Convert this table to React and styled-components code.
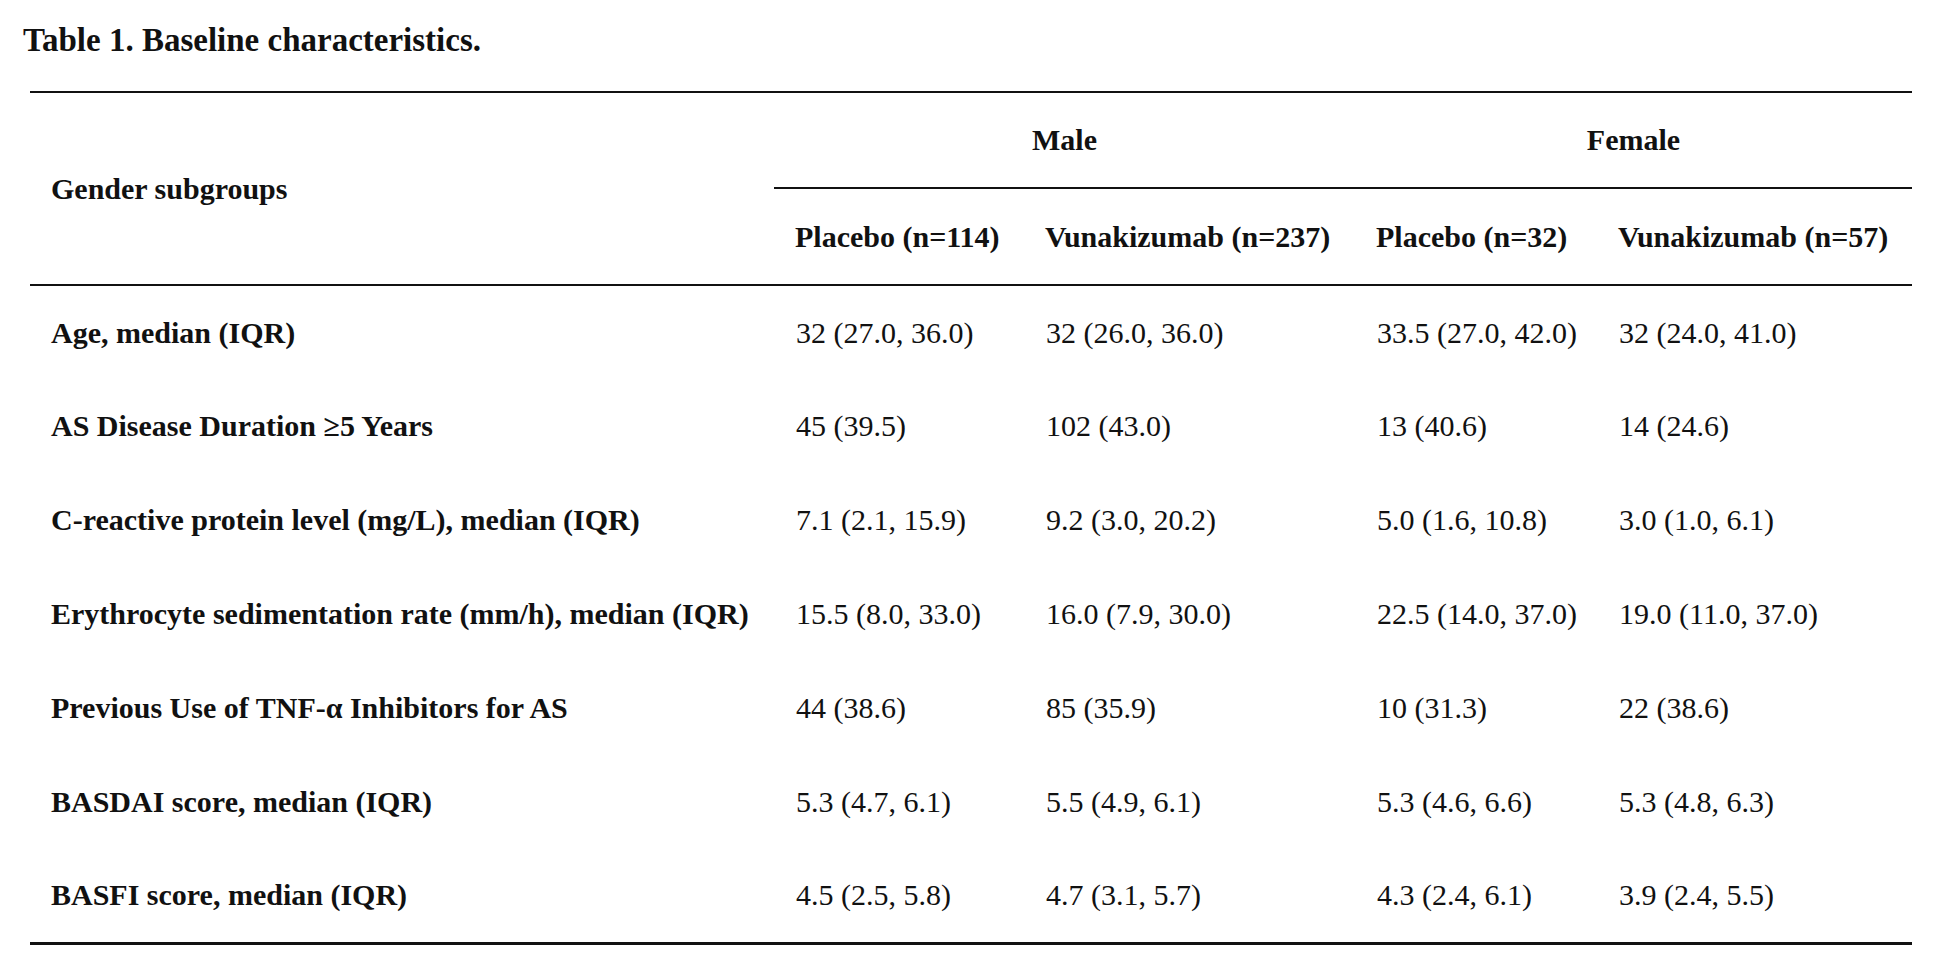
import React from "react";
import styled, { createGlobalStyle } from "styled-components";

const GlobalStyle = createGlobalStyle`
  body {
    margin: 0;
    background: #fff;
    font-family: "Liberation Serif", "Times New Roman", serif;
    color: #111;
  }
`;

const Page = styled.div`
  width: 1949px;
  height: 970px;
  padding: 22px 0 0 0;
  box-sizing: border-box;
  background: #fff;
`;

const Title = styled.h1`
  margin: 0 0 33px 23px;
  font-size: 33px;
  line-height: 36px;
  font-weight: bold;
`;

const Table = styled.table`
  margin-left: 30px;
  width: 1882px;
  table-layout: fixed;
  border-collapse: collapse;
  border-top: 2px solid #111;
  border-bottom: 3px solid #111;
  font-size: 30px;
  line-height: 34px;
`;

const HeadRow = styled.tr`
  height: ${(p) => p.$h}px;
`;

const HeadCell = styled.th`
  padding: 0 0 0 ${(p) => (p.$center ? 0 : 21)}px;
  text-align: ${(p) => (p.$center ? "center" : "left")};
  vertical-align: middle;
  font-weight: bold;
  white-space: nowrap;
  border-bottom: ${(p) => (p.$rule ? "2px solid #111" : "none")};
`;

const BodyRow = styled.tr`
  height: 94px;
`;

const RowLabel = styled.td`
  padding: 0 0 0 21px;
  font-weight: bold;
  white-space: nowrap;
  vertical-align: middle;
`;

const ValueCell = styled.td`
  padding: 0 0 0 22px;
  white-space: nowrap;
  vertical-align: middle;
`;

const rows = [
  ["Age, median (IQR)", "32 (27.0, 36.0)", "32 (26.0, 36.0)", "33.5 (27.0, 42.0)", "32 (24.0, 41.0)"],
  ["AS Disease Duration \u22655 Years", "45 (39.5)", "102 (43.0)", "13 (40.6)", "14 (24.6)"],
  ["C-reactive protein level (mg/L), median (IQR)", "7.1 (2.1, 15.9)", "9.2 (3.0, 20.2)", "5.0 (1.6, 10.8)", "3.0 (1.0, 6.1)"],
  ["Erythrocyte sedimentation rate (mm/h), median (IQR)", "15.5 (8.0, 33.0)", "16.0 (7.9, 30.0)", "22.5 (14.0, 37.0)", "19.0 (11.0, 37.0)"],
  ["Previous Use of TNF-\u03b1 Inhibitors for AS", "44 (38.6)", "85 (35.9)", "10 (31.3)", "22 (38.6)"],
  ["BASDAI score, median (IQR)", "5.3 (4.7, 6.1)", "5.5 (4.9, 6.1)", "5.3 (4.6, 6.6)", "5.3 (4.8, 6.3)"],
  ["BASFI score, median (IQR)", "4.5 (2.5, 5.8)", "4.7 (3.1, 5.7)", "4.3 (2.4, 6.1)", "3.9 (2.4, 5.5)"],
];

const arms = ["Placebo (n=114)", "Vunakizumab (n=237)", "Placebo (n=32)", "Vunakizumab (n=57)"];

const App = () => {
  return (
    <Page>
      <GlobalStyle />
      <Title>Table 1. Baseline characteristics.</Title>
      <Table>
        <colgroup>
          <col style={{ width: 744 }} />
          <col style={{ width: 250 }} />
          <col style={{ width: 331 }} />
          <col style={{ width: 242 }} />
          <col style={{ width: 315 }} />
        </colgroup>
        <thead>
          <HeadRow $h={96}>
            <HeadCell rowSpan={2} $rule>
              Gender subgroups
            </HeadCell>
            <HeadCell colSpan={2} $center $rule>
              Male
            </HeadCell>
            <HeadCell colSpan={2} $center $rule>
              Female
            </HeadCell>
          </HeadRow>
          <HeadRow $h={97}>
            {arms.map((a, i) => (
              <HeadCell key={i} $rule>
                {a}
              </HeadCell>
            ))}
          </HeadRow>
        </thead>
        <tbody>
          {rows.map((r) => (
            <BodyRow key={r[0]}>
              <RowLabel>{r[0]}</RowLabel>
              {r.slice(1).map((v, i) => (
                <ValueCell key={i}>{v}</ValueCell>
              ))}
            </BodyRow>
          ))}
        </tbody>
      </Table>
    </Page>
  );
};

export default App;
